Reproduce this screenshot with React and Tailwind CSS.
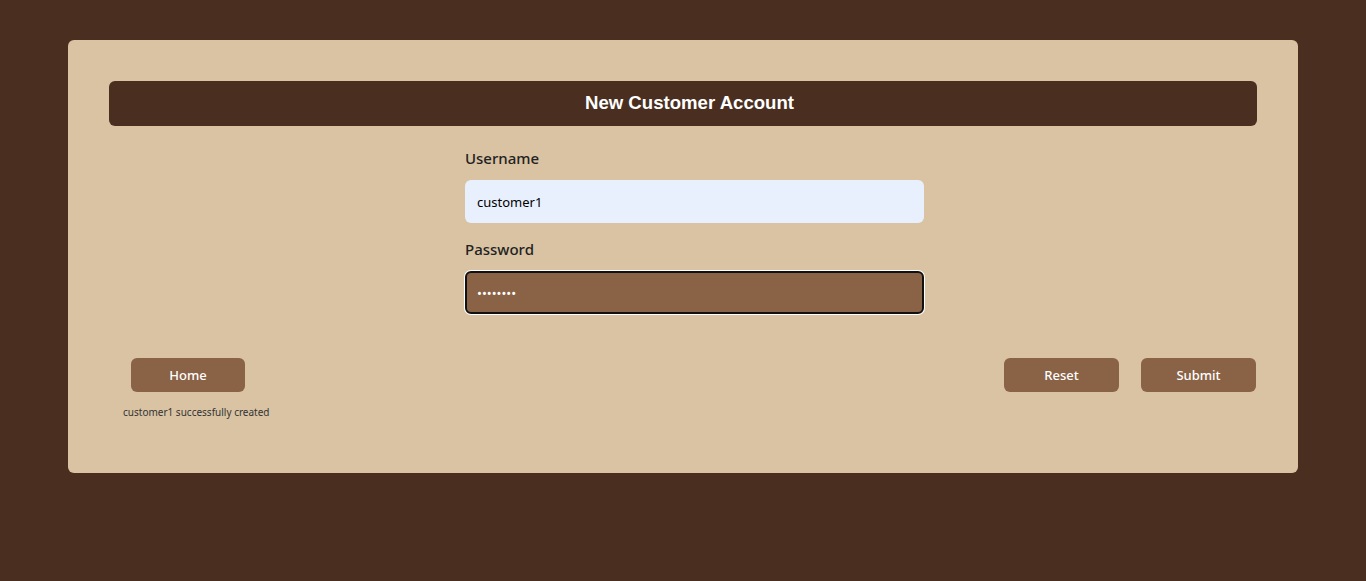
import { useState } from "react";

function App(){
    const [username,setUsername]=useState("customer1")
    const [password,setPassword]=useState("password")

    return (
  <div className="min-h-[581px] w-full bg-[#4a2f20] pt-10 px-[68px] font-['Noto_Sans',sans-serif]">
    <div className="w-full bg-[#d9c3a3] rounded-md px-[41px] pt-[41px] pb-[53px]">
      <div className="w-full h-[45px] bg-[#4a2f20] rounded-md flex items-center justify-center pl-[13px] pb-[2px]">
        <h1 className="text-white text-[18.6px] font-bold font-['Liberation_Sans',Arial,sans-serif]">New Customer Account</h1>
      </div>

      <div className="ml-[356px] w-[459px] mt-[22px] flex flex-col">
        <label className="text-[15px] font-medium text-[#222] leading-5">Username</label>
        <input
          value={username}
          onChange={(e)=>setUsername(e.target.value)}
          className="mt-3 h-[43px] w-full rounded-md bg-[#e8f0fe] px-3 text-[13px] text-black outline-none"
        />
        <label className="mt-4 text-[15px] font-medium text-[#222] leading-5">Password</label>
        <input
          type="password"
          value={password}
          onChange={(e)=>setPassword(e.target.value)}
          className="mt-3 h-[43px] w-full rounded-md bg-[#8a6246] border-2 border-[#111] ring-1 ring-white px-[10px] text-[13px] text-white outline-none"
        />
      </div>

      <div className="mt-[44px] flex justify-between items-start">
        <div className="flex flex-col">
          <button className="ml-[22px] w-[114px] h-[34px] pt-[2px] rounded-md bg-[#8a6246] text-white text-[13px] font-medium">Home</button>
          <p className="ml-[14px] mt-3 text-[10px] text-[#333] leading-4">customer1 successfully created</p>
        </div>
        <div className="flex gap-[22px] mr-px">
          <button className="w-[115px] h-[34px] pt-[2px] rounded-md bg-[#8a6246] text-white text-[13px] font-medium">Reset</button>
          <button className="w-[115px] h-[34px] pt-[2px] rounded-md bg-[#8a6246] text-white text-[13px] font-medium">Submit</button>
        </div>
      </div>
    </div>
  </div>
    );
}
export default App
